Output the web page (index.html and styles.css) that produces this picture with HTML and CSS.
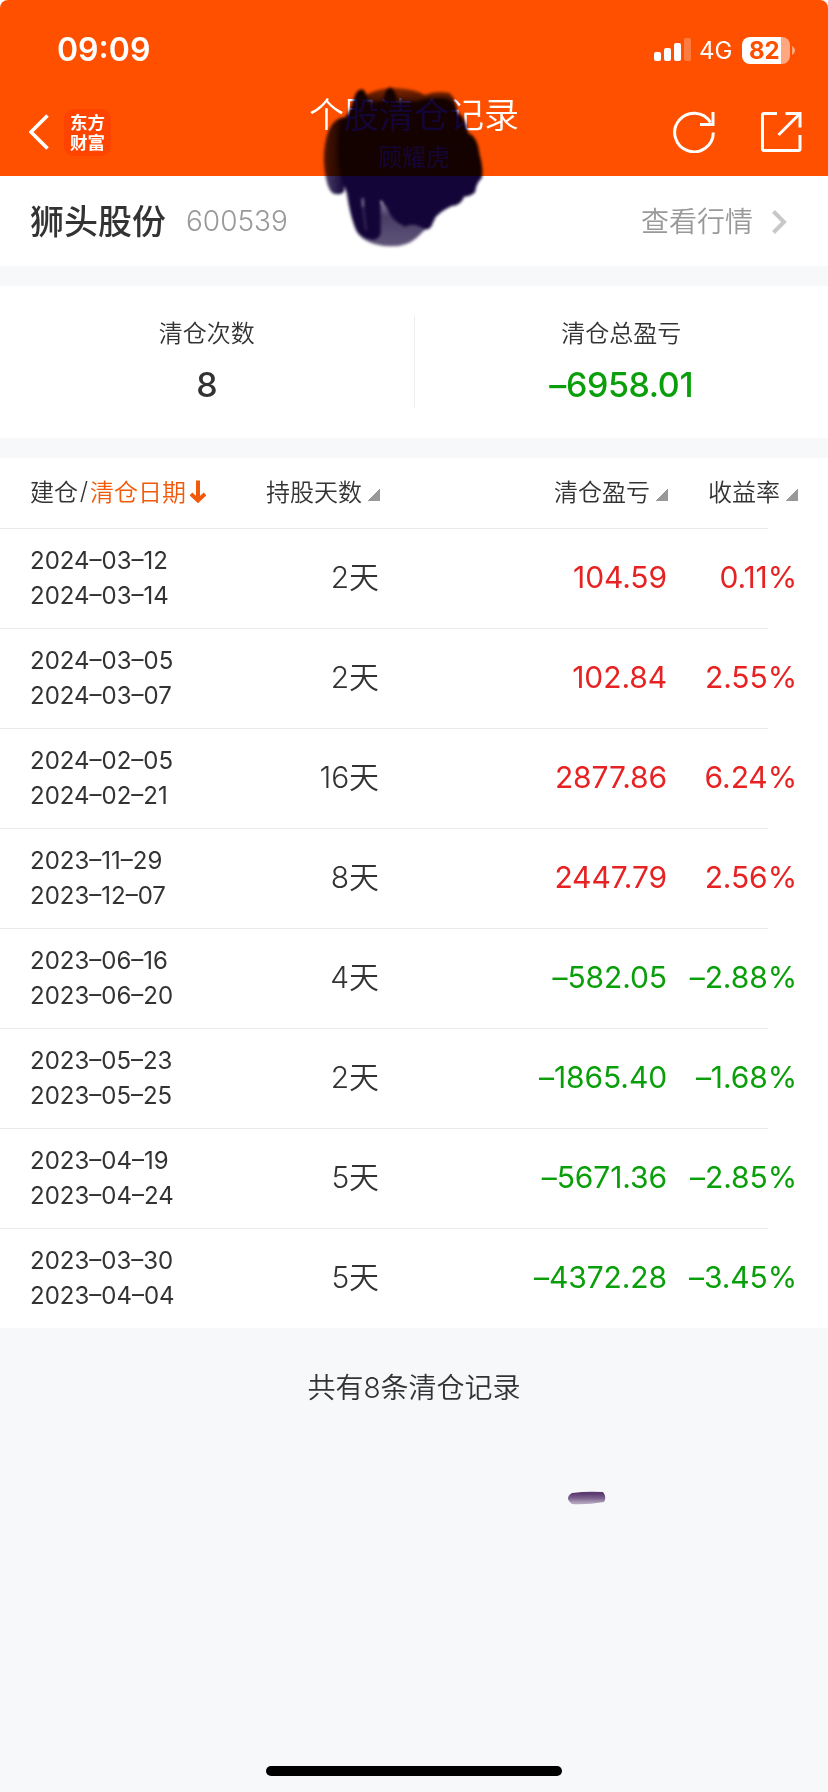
FILE: index.html
```html
<!DOCTYPE html>
<html lang="zh-CN">
<head>
    <meta charset="UTF-8">
    <meta name="viewport" content="width=device-width, initial-scale=1.0">
    <title>个股清仓记录</title>
    <link rel="stylesheet" href="styles.css">
</head>
<body>
    <header class="header">
        <div class="status-bar">
            <span class="time">09:09</span>
            <div class="status-icons">
                <svg class="signal" width="37" height="24" viewBox="0 0 37 24" fill="#fff">
                    <rect x="0" y="14" width="7" height="9" rx="2"/>
                    <rect x="10" y="10" width="7" height="13" rx="2"/>
                    <rect x="20" y="5" width="7" height="18" rx="2"/>
                    <rect x="30" y="0" width="7" height="23" rx="2" opacity="0.25"/>
                </svg>
                <span class="network">4G</span>
                <div class="battery"><span>82</span></div>
                <svg class="battery-tip" width="3" height="9" viewBox="0 0 3 9"><path d="M0 0C4 2 4 7 0 9z" fill="#fff" opacity="0.5"/></svg>
            </div>
        </div>
        <div class="nav-bar">
            <div class="nav-left">
                <svg width="20" height="36" viewBox="0 0 20 36" fill="none" stroke="#fff" stroke-width="3.6"><path d="M18.5 1.5L2 18L18.5 34.5"/></svg>
                <div class="logo">东方<br>财富</div>
            </div>
            <div class="nav-title">
                <h1>个股清仓记录</h1>
                <p>顾耀虎</p>
            </div>
            <div class="nav-right">
                <svg width="42" height="42" viewBox="0 0 42 42" fill="none" stroke="#fff" stroke-width="3"><path d="M40.3 21.5A19.3 19.3 0 1 1 37.5 11.5"/><path d="M40 1V13.5H27"/></svg>
                <svg width="42" height="42" viewBox="0 0 42 42" fill="none" stroke="#fff" stroke-width="3"><path d="M17 2.5H4Q2.5 2.5 2.5 4V38Q2.5 39.5 4 39.5H38.5Q40 39.5 40 38V24"/><path d="M25.5 2.5H40V16.5"/><path d="M40 2.5L18.5 24"/></svg>
            </div>
        </div>
    </header>

    <!-- Stock -->
    <section class="stock">
        <h2>狮头股份</h2>
        <span class="code">600539</span>
        <a class="quote">查看行情
            <svg width="15" height="24" viewBox="0 0 15 24" fill="none" stroke="#c8c8c8" stroke-width="4"><path d="M1.5 1.5L12 12L1.5 22.5"/></svg>
        </a>
    </section>

    <!-- Summary -->
    <section class="summary">
        <div class="summary-item">
            <p>清仓次数</p>
            <strong>8</strong>
        </div>
        <div class="summary-item">
            <p>清仓总盈亏</p>
            <strong class="down">–6958.01</strong>
        </div>
    </section>

    <!-- Records -->
    <section class="records">
        <div class="row head">
            <div class="sort-date">建仓<span>/</span><em>清仓日期</em><svg width="16" height="24" viewBox="0 0 16 24" fill="none" stroke="#f05a0a"><path d="M8 0.5V21" stroke-width="4"/><path d="M1 14L8 20.5L15 14" stroke-width="4"/></svg></div>
            <div>持股天数<i></i></div>
            <div>清仓盈亏<i></i></div>
            <div>收益率<i></i></div>
        </div>
        <div class="row"><div class="dates">2024–03–12<br>2024–03–14</div><div class="days">2天</div><div class="up">104.59</div><div class="up">0.11%</div></div>
        <div class="row"><div class="dates">2024–03–05<br>2024–03–07</div><div class="days">2天</div><div class="up">102.84</div><div class="up">2.55%</div></div>
        <div class="row"><div class="dates">2024–02–05<br>2024–02–21</div><div class="days">16天</div><div class="up">2877.86</div><div class="up">6.24%</div></div>
        <div class="row"><div class="dates">2023–11–29<br>2023–12–07</div><div class="days">8天</div><div class="up">2447.79</div><div class="up">2.56%</div></div>
        <div class="row"><div class="dates">2023–06–16<br>2023–06–20</div><div class="days">4天</div><div class="down">–582.05</div><div class="down">–2.88%</div></div>
        <div class="row"><div class="dates">2023–05–23<br>2023–05–25</div><div class="days">2天</div><div class="down">–1865.40</div><div class="down">–1.68%</div></div>
        <div class="row"><div class="dates">2023–04–19<br>2023–04–24</div><div class="days">5天</div><div class="down">–5671.36</div><div class="down">–2.85%</div></div>
        <div class="row"><div class="dates">2023–03–30<br>2023–04–04</div><div class="days">5天</div><div class="down">–4372.28</div><div class="down">–3.45%</div></div>
    </section>

    <footer class="footer">共有8条清仓记录</footer>
    <div class="home-indicator"></div>

    <!-- Marker strokes over the page -->
    <svg class="marker marker-title" width="260" height="190" viewBox="0 0 780 570">
        <defs>
            <filter id="soft" x="-10%" y="-10%" width="120%" height="120%" color-interpolation-filters="sRGB"><feGaussianBlur stdDeviation="4"/></filter>
            <linearGradient id="top" x1="0" y1="0" x2="0" y2="1"><stop offset="0" stop-color="#140539" stop-opacity="0.5"/><stop offset="0.7" stop-color="#140539"/></linearGradient>
            <linearGradient id="side" x1="0" y1="0" x2="1" y2="0"><stop offset="0" stop-color="#140539" stop-opacity="0.75"/><stop offset="0.8" stop-color="#140539"/></linearGradient>
            <linearGradient id="bottom" x1="0" y1="0" x2="0" y2="1"><stop offset="0.2" stop-color="#140539" stop-opacity="0.45"/><stop offset="0.5" stop-color="#140539" stop-opacity="0.78"/><stop offset="1" stop-color="#140539" stop-opacity="0.68"/></linearGradient>
        </defs>
        <g filter="url(#soft)">
            <path d="M185 110Q240 50 320 54Q380 58 405 75Q440 60 480 70Q500 90 503 140H185Z" fill="url(#top)"/>
            <path d="M165 142Q125 145 110 200Q97 250 104 300Q110 355 128 370Q150 378 162 365L180 142Z" fill="url(#side)"/>
            <path d="M165 350Q180 440 200 485Q225 525 300 529Q350 530 380 503L435 450L400 400H260L220 350Z" fill="url(#bottom)"/>
            <path d="M150 160Q175 140 190 90Q200 56 216 58Q230 62 236 100L280 94Q285 52 302 52Q318 60 322 95H380Q420 78 470 85Q495 100 505 130Q525 140 535 190Q562 200 568 250Q582 300 575 325Q558 340 556 365Q545 378 522 380Q515 405 485 408Q440 430 430 452Q425 480 405 478Q370 455 345 470Q305 455 290 412L272 390V490Q265 515 240 508Q205 500 195 470Q180 430 172 370L155 330Q135 250 150 160Z" fill="#140539"/>
            <path d="M218 385L219 412" stroke="#8d86a4" stroke-width="6" fill="none"/>
            <path d="M219 410L228 480" stroke="#463b65" stroke-width="4" fill="none"/>
        </g>
    </svg>
    <svg class="marker marker-dash" width="42" height="17" viewBox="0 0 42 17">
        <defs>
            <linearGradient id="dash" x1="0" y1="0" x2="0" y2="1"><stop offset="0.15" stop-color="#5b3b70"/><stop offset="0.5" stop-color="#7a5f8c"/><stop offset="0.9" stop-color="#b3a5bd"/></linearGradient>
        </defs>
        <path d="M6 3Q20 1 37 2Q41 7 38 12Q20 15 6 14Q-2 8 6 3Z" fill="url(#dash)"/>
    </svg>
</body>
</html>
```
FILE: styles.css
```css
* {
    box-sizing: border-box;
    margin: 0;
    padding: 0;
}
body {
    position: relative;
    height: 1792px;
    background: #fff;
    color: #333;
    font-family: Inter, "Noto Sans CJK SC", sans-serif;
    font-weight: 350;
    display: flex;
    flex-direction: column;
    overflow: hidden;
}
.header {
    height: 176px;
    background: #ff5000;
    color: #fff;
    border-radius: 8px 8px 0 0;
}
.status-bar {
    height: 88px;
    padding: 12px 33px 0 57px;
    display: flex;
    align-items: center;
    justify-content: space-between;
}
.time {
    font-size: 32px;
    font-weight: 600;
    line-height: 38px;
}
.status-icons {
    display: flex;
    align-items: center;
}
.network {
    width: 33px;
    margin: 0 10px 0 8px;
    font-size: 24px;
    font-weight: 400;
}
.battery {
    width: 48px;
    height: 27px;
    border-radius: 8px;
    background: linear-gradient(to right, #fff 39px, #ffa780 39px);
    color: #ff5000;
    font-size: 24px;
    font-weight: 700;
    line-height: 27px;
    padding-left: 7px;
}
.battery-tip {
    margin-left: 2px;
}
.nav-bar {
    height: 88px;
    padding: 0 26px 0 29px;
    display: grid;
    grid-template-columns: 198px 1fr 201px;
    align-items: center;
}
.nav-left {
    display: flex;
    align-items: center;
    gap: 15px;
}
.logo {
    width: 47px;
    height: 47px;
    padding-top: 4px;
    border-radius: 9px;
    background: #ff4400;
    font-size: 17.5px;
    font-weight: 700;
    line-height: 20px;
    text-align: center;
}
.nav-title {
    padding-top: 4px;
    text-align: center;
}
.nav-title h1 {
    font-size: 35px;
    font-weight: 350;
    line-height: 44px;
}
.nav-title p {
    padding-top: 3px;
    font-size: 24px;
    line-height: 36px;
}
.nav-right {
    display: flex;
    justify-content: flex-end;
    gap: 45px;
}
.stock {
    height: 90px;
    padding: 0 41px 0 30px;
    display: flex;
    align-items: center;
}
.stock h2 {
    padding-bottom: 3px;
    font-size: 34px;
    font-weight: 500;
}
.code {
    margin-left: 20px;
    color: #999;
    font-size: 28px;
}
.quote {
    margin-left: auto;
    padding-top: 1px;
    display: flex;
    align-items: center;
    gap: 19px;
    color: #999;
    font-size: 28px;
    line-height: 42px;
}
.summary {
    height: 192px;
    border: solid #f6f8fa;
    border-width: 20px 0;
    display: flex;
    align-items: center;
}
.summary-item {
    flex: 1;
    height: 92px;
    text-align: center;
}
.summary-item + .summary-item {
    border-left: 1px solid #eee;
}
.summary-item p {
    font-size: 24px;
    line-height: 36px;
}
.summary-item strong {
    display: block;
    margin-top: 7px;
    font-size: 34px;
    font-weight: 500;
    letter-spacing: -0.4px;
    line-height: 52px;
}
.row {
    position: relative;
    height: 100px;
    padding-left: 30px;
    display: grid;
    grid-template-columns: 190px 160px 288px 130px;
    align-items: center;
    font-size: 30px;
    font-weight: 400;
    letter-spacing: -0.1px;
    text-align: right;
}
/* divider stops short of the right edge */
.row::before {
    content: "";
    position: absolute;
    top: 0;
    left: 0;
    width: 768px;
    height: 1px;
    background: #ebebeb;
}
.row > div {
    padding: 0 1px 2px 0;
    white-space: nowrap;
}
.row .dates {
    padding-bottom: 0;
    font-size: 24px;
    letter-spacing: 0;
    line-height: 35px;
    text-align: left;
}
.row .days {
    padding-bottom: 6px;
    font-weight: 350;
}
.head {
    height: 70px;
    font-size: 24px;
    font-weight: 350;
    letter-spacing: 0;
}
.head::before {
    display: none;
}
.head > div {
    padding: 0 0 5px;
}
.head .sort-date {
    display: flex;
    align-items: center;
    text-align: left;
}
.sort-date span {
    width: 12px;
    text-align: center;
}
.head em {
    color: #f05a0a;
    font-style: normal;
}
.head .sort-date svg {
    margin: 3px 0 0 4px;
}
.head i {
    display: inline-block;
    width: 12px;
    height: 12px;
    margin-left: 6px;
    background: linear-gradient(135deg, transparent 50%, #999 50%);
}
.up {
    color: #e62222;
}
.down {
    color: #0a9f0a;
}
.footer {
    flex: 1;
    padding-top: 39px;
    background: #f6f8fa;
    font-size: 28px;
    line-height: 42px;
    text-align: center;
}
.home-indicator {
    position: absolute;
    left: 266px;
    bottom: 16px;
    width: 296px;
    height: 10px;
    border-radius: 5px;
    background: #000;
}
.marker {
    position: absolute;
}
.marker-title {
    left: 290px;
    top: 70px;
    mix-blend-mode: multiply;
}
.marker-dash {
    left: 566px;
    top: 1490px;
}
```
